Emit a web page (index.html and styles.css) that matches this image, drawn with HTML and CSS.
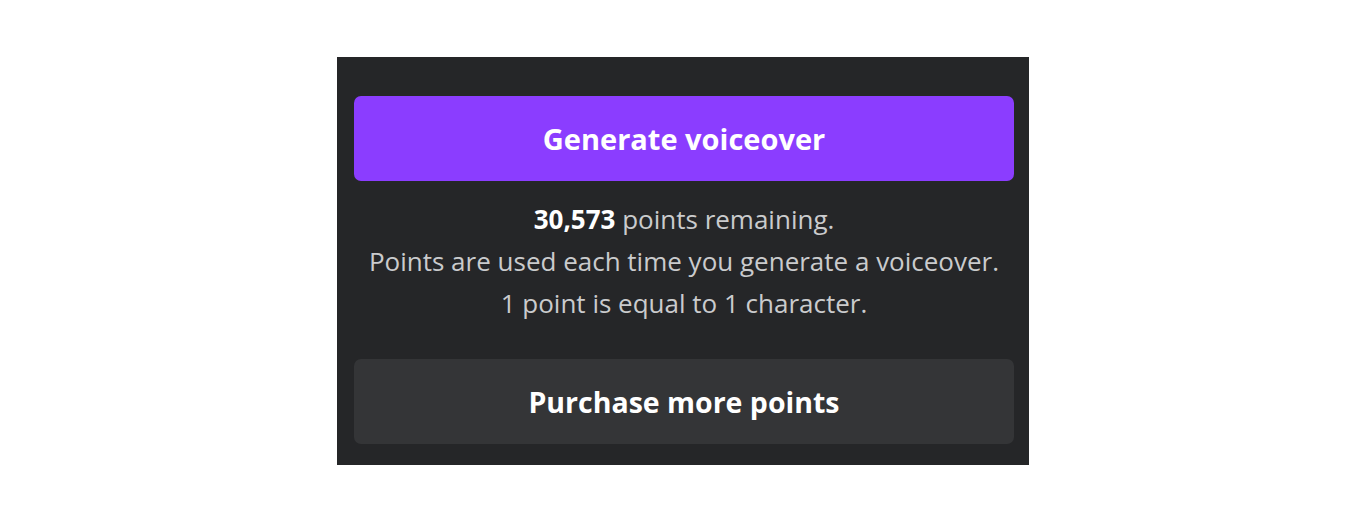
FILE: index.html
```html
<!DOCTYPE html>
<html lang="en">
<head>
    <meta charset="UTF-8">
    <meta name="viewport" content="width=device-width, initial-scale=1.0">
    <title>Generate voiceover</title>
    <link rel="stylesheet" href="styles.css">
</head>
<body>
    <div class="panel">
        <button class="btn btn-primary" type="button">Generate voiceover</button>
        <div class="points-info">
            <p><strong>30,573</strong> points remaining.</p>
            <p>Points are used each time you generate a voiceover.</p>
            <p>1 point is equal to 1 character.</p>
        </div>
        <button class="btn btn-secondary" type="button">Purchase more points</button>
    </div>
</body>
</html>
```

FILE: styles.css
```css
body {
    margin: 0;
    background: #ffffff;
    font-family: "Open Sans", "Liberation Sans", sans-serif;
    display: flex;
    justify-content: center;
}
.panel {
    margin-top: 57px;
    width: 692px;
    height: 408px;
    box-sizing: border-box;
    background: #252628;
    padding: 39px 15px 0 17px;
    display: flex;
    flex-direction: column;
}
.btn {
    height: 85px;
    width: 100%;
    border: none;
    border-radius: 7px;
    color: #ffffff;
    font-family: inherit;
    font-weight: 700;
    font-size: 29px;
    cursor: pointer;
}
.btn-primary {
    background: #8b3dff;
}
.btn-secondary {
    background: #343537;
    margin-top: 35px;
    font-size: 28.5px;
}
.points-info {
    margin-top: 17px;
    text-align: center;
    color: #cacbcd;
    font-size: 26px;
}
.points-info p {
    margin: 0;
    line-height: 42px;
}
.points-info strong {
    color: #ffffff;
    font-weight: 700;
}
```
